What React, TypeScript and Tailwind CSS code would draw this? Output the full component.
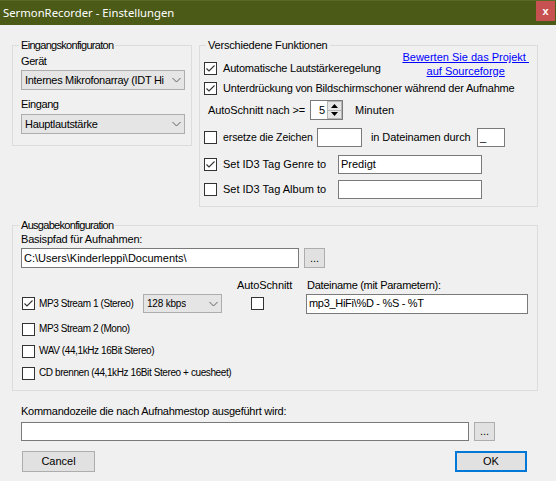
import React from "react";

const F = { fontFamily: '"Liberation Sans", Arial, sans-serif' };

function Check({ checked = false }: { checked?: boolean }) {
  return (
    <span className="w-[13px] h-[13px] border border-[#333333] bg-white flex items-center justify-center shrink-0">
      {checked && (
        <svg width="11" height="11" viewBox="0 0 11 11">
          <polyline points="1.5,5.5 4,8 9.5,2.5" fill="none" stroke="#333333" strokeWidth="1.1" />
        </svg>
      )}
    </span>
  );
}

function Chevron() {
  return (
    <svg width="9" height="6" viewBox="0 0 9 6" className="shrink-0">
      <polyline points="0.5,1 4.5,5 8.5,1" fill="none" stroke="#606060" strokeWidth="1" />
    </svg>
  );
}

function Combo({ text, className, textClass = "text-[11px] tracking-[-0.3px]" }: { text: string; className: string; textClass?: string }) {
  return (
    <div className={`flex items-center justify-between bg-[#e5e5e5] border border-[#adadad] pl-[3px] pr-[3px] overflow-hidden ${className}`}>
      <span className={`${textClass} leading-[13px] whitespace-nowrap overflow-hidden`}>{text}</span>
      <Chevron />
    </div>
  );
}

function TextBox({ text = "", className }: { text?: string; className: string }) {
  return (
    <div className={`flex items-center bg-white border border-[#7a7a7a] pl-[2px] text-[11px] leading-[13px] whitespace-nowrap overflow-hidden ${className}`}>
      {text}
    </div>
  );
}

function Btn({ label, className, borderClass = "border border-[#adadad]" }: { label: string; className: string; borderClass?: string }) {
  return (
    <div className={`flex items-center justify-center bg-[#e1e1e1] text-[11px] leading-[13px] ${borderClass} ${className}`}>
      {label}
    </div>
  );
}

function Legend({ children }: { children: React.ReactNode }) {
  return <legend className="ml-[6px] px-[2px] text-[11px] leading-[14px] tracking-[-0.2px]">{children}</legend>;
}

function CondLegend({ children }: { children: React.ReactNode }) {
  return <legend className="ml-[6px] px-[2px] text-[11px] leading-[14px] tracking-[-0.7px]">{children}</legend>;
}

export default function App() {
  return (
    <div className="w-[556px] h-[481px] bg-[#f0f0f0] overflow-hidden flex flex-col text-black" style={F}>
      {/* Title bar */}
      <div className="h-[25px] bg-[#4b5a17] border-t border-[#5a6a26] flex items-start justify-between shrink-0">
        <span
          className="text-white text-[11.3px] leading-[22px] pl-[3px] mt-[1px]"
          style={{ fontFamily: '"Noto Sans", "Open Sans", sans-serif' }}
        >
          SermonRecorder - Einstellungen
        </span>
        <div className="w-[19px] h-[20px] bg-[#c75050] mr-[1px] flex items-center justify-center text-white font-bold text-[11px] leading-[11px]">
          x
        </div>
      </div>

      {/* Top row */}
      <div className="flex items-start mt-[13px]">
        {/* Left group */}
        <fieldset className="border border-[#dcdcdc] ml-[12px] w-[180px] pb-[11px]">
          <CondLegend>Eingangskonfiguraton</CondLegend>
          <div className="ml-[8px] mt-[3px] h-[13px] text-[11px] leading-[13px] tracking-[-0.4px]">Gerät</div>
          <Combo text="Internes Mikrofonarray (IDT Hi" className="ml-[8px] mt-[2px] w-[164px] h-[20px]" />
          <div className="ml-[8px] mt-[8px] h-[13px] text-[11px] leading-[13px] tracking-[-0.4px]">Eingang</div>
          <Combo text="Hauptlautstärke" className="ml-[8px] mt-[3px] w-[164px] h-[20px]" />
        </fieldset>

        {/* Right group */}
        <fieldset className="border border-[#dcdcdc] ml-[7px] w-[339px] pb-[7px]">
          <Legend>Verschiedene Funktionen</Legend>
          <div className="flex items-start h-[30px]">
            <div className="flex items-center ml-[4px] mt-[10px]">
              <Check checked />
              <span className="ml-[6px] text-[11px] leading-[13px] tracking-[-0.2px] whitespace-nowrap">Automatische Lautstärkeregelung</span>
            </div>
            <div className="ml-auto mr-[8px] -mt-[2px] text-center text-[11px] leading-[14px] text-[#0000ff] underline whitespace-pre">
              <div>Bewerten Sie das Projekt </div>
              <div>auf Sourceforge</div>
            </div>
          </div>
          <div className="flex items-center h-[13px] ml-[4px]">
            <Check checked />
            <span className="ml-[6px] text-[11px] leading-[13px] tracking-[-0.2px] whitespace-nowrap">
              Unterdrückung von Bildschirmschoner während der Aufnahme
            </span>
          </div>
          <div className="flex items-center h-[20px] mt-[5px]">
            <span className="ml-[8px] w-[102px] text-[11px] leading-[13px] tracking-[-0.1px] whitespace-nowrap">AutoSchnitt nach &gt;=</span>
            <div className="flex w-[33px] h-[20px] bg-white border border-[#7a7a7a]">
              <div className="flex-1 flex items-center justify-end pr-[2px] text-[11px] leading-[13px]">5</div>
              <div className="w-[15px] flex flex-col">
                <div className="flex-1 flex items-center justify-center bg-[#e6e6e6] border border-[#b5b5b5]">
                  <svg width="7" height="4" viewBox="0 0 7 4"><polygon points="3.5,0 7,4 0,4" fill="#000" /></svg>
                </div>
                <div className="flex-1 flex items-center justify-center bg-[#e6e6e6] border border-t-0 border-[#b5b5b5]">
                  <svg width="7" height="4" viewBox="0 0 7 4"><polygon points="0,0 7,0 3.5,4" fill="#000" /></svg>
                </div>
              </div>
            </div>
            <span className="ml-[12px] text-[11px] leading-[13px]">Minuten</span>
          </div>
          <div className="flex items-center h-[19px] mt-[8px] ml-[4px]">
            <Check />
            <span className="ml-[6px] w-[94px] text-[10.5px] leading-[13px] tracking-[-0.1px] whitespace-nowrap">ersetze die Zeichen</span>
            <TextBox className="w-[45px] h-[19px]" />
            <span className="ml-[9px] w-[106px] text-[11px] leading-[13px] tracking-[-0.1px] whitespace-nowrap">in Dateinamen durch</span>
            <TextBox text="_" className="w-[28px] h-[19px]" />
          </div>
          <div className="flex items-center h-[19px] mt-[8px] ml-[4px]">
            <Check checked />
            <span className="ml-[6px] w-[115px] text-[11px] leading-[13px] whitespace-nowrap">Set ID3 Tag Genre to</span>
            <TextBox text="Predigt" className="w-[144px] h-[19px]" />
          </div>
          <div className="flex items-center h-[19px] mt-[6px] ml-[4px]">
            <Check />
            <span className="ml-[6px] w-[115px] text-[11px] leading-[13px] whitespace-nowrap">Set ID3 Tag Album to</span>
            <TextBox className="w-[144px] h-[19px]" />
          </div>
        </fieldset>
      </div>

      {/* Output group */}
      <fieldset className="border border-[#dcdcdc] ml-[12px] w-[526px] mt-[11px] pb-[6px]">
        <CondLegend>Ausgabekonfiguration</CondLegend>
        <div className="ml-[8px] mt-[1px] h-[13px] text-[11px] leading-[13px] tracking-[-0.2px]">Basispfad für Aufnahmen:</div>
        <div className="flex mt-[2px] ml-[8px] h-[20px]">
          <TextBox text="C:\Users\Kinderleppi\Documents\" className="w-[278px] h-[20px]" />
          <Btn label="..." className="ml-[5px] w-[21px] h-[20px]" />
        </div>
        <div className="flex mt-[11px] h-[13px] pl-[224px] text-[11px] leading-[13px] whitespace-nowrap">
          <span className="w-[70px] tracking-[-0.1px]">AutoSchnitt</span>
          <span className="tracking-[-0.3px]">Dateiname (mit Parametern):</span>
        </div>
        <div className="flex items-center mt-[1px] h-[21px] pl-[9px]">
          <div className="flex items-center w-[121px]">
            <Check checked />
            <span className="ml-[4px] text-[10px] leading-[12px] tracking-[-0.4px] whitespace-nowrap">MP3 Stream 1 (Stereo)</span>
          </div>
          <Combo text="128 kbps" textClass="text-[10px] tracking-[-0.2px]" className="w-[79px] h-[19px]" />
          <span className="ml-[29px]"><Check /></span>
          <div className="ml-[42px] w-[222px] h-[20px] flex items-center bg-white border border-[#7a7a7a] pl-[2px] text-[11px] leading-[13px] tracking-[-0.3px] whitespace-nowrap overflow-hidden">
            mp3_HiFi\%D - %S - %T
          </div>
        </div>
        <div className="mt-[4px] pl-[9px] flex flex-col">
          {["MP3 Stream 2 (Mono)", "WAV (44,1kHz 16Bit Stereo)", "CD brennen (44,1kHz 16Bit Stereo + cuesheet)"].map((t) => (
            <div key={t} className="flex items-center h-[22px]">
              <Check />
              <span className="ml-[4px] text-[10px] leading-[12px] tracking-[-0.4px] whitespace-nowrap">{t}</span>
            </div>
          ))}
        </div>
      </fieldset>

      {/* Bottom */}
      <div className="ml-[21px] mt-[14px] h-[13px] text-[11px] leading-[13px] tracking-[-0.25px]">Kommandozeile die nach Aufnahmestop ausgeführt wird:</div>
      <div className="flex ml-[21px] mt-[4px] h-[19px]">
        <TextBox className="w-[448px] h-[19px]" />
        <Btn label="..." className="ml-[5px] w-[21px] h-[19px]" />
      </div>
      <div className="flex justify-between mt-[10px] ml-[22px] mr-[29px]">
        <Btn label="Cancel" className="w-[73px] h-[21px]" />
        <Btn label="OK" className="w-[72px] h-[21px]" borderClass="border-2 border-[#0078d7]" />
      </div>
    </div>
  );
}
